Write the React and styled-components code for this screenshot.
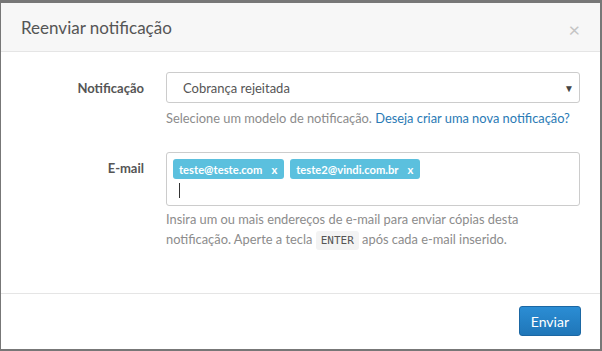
import React from "react";
import styled, { createGlobalStyle } from "styled-components";

const GlobalStyle = createGlobalStyle`
  html, body {
    margin: 0;
    padding: 0;
    background: #777;
    font-family: Lato, "Open Sans", sans-serif;
  }
  * { box-sizing: border-box; }
`;

const Backdrop = styled.div`
  width: 602px;
  height: 351px;
  padding: 3px 2px 2px 1px;
  background: #777;
`;

const Modal = styled.div`
  width: 599px;
  height: 346px;
  background: #fff;
  display: flex;
  flex-direction: column;
`;

const Header = styled.header`
  height: 49px;
  display: flex;
  align-items: center;
  justify-content: space-between;
  padding: 0 20px 0 20px;
  background: #f7f7f7;
  border-bottom: 1px solid #e5e5e5;
`;

const Title = styled.h4`
  margin: 0;
  font-size: 17px;
  font-weight: 400;
  color: #555;
`;

const Close = styled.button`
  border: 0;
  background: none;
  padding: 0;
  color: #c4c4c4;
  font-size: 20px;
  line-height: 1;
  font-family: Lato, sans-serif;
  margin-top: 4px;
`;

const Body = styled.div`
  flex: 1;
  padding: 20px 20px 0 0;
  display: grid;
  grid-template-columns: 143px 1fr;
  column-gap: 22px;
  row-gap: 24px;
  align-content: start;
`;

const Label = styled.label`
  text-align: right;
  font-size: 13px;
  font-weight: 700;
  color: #555;
  padding-top: ${(p) => p.$top}px;
`;

const Field = styled.div`
  display: flex;
  flex-direction: column;
`;

const Select = styled.div`
  height: 31px;
  border: 1px solid #ccc;
  border-radius: 3px;
  display: flex;
  align-items: center;
  justify-content: space-between;
  padding: 0 5px 0 16px;
  font-size: 13px;
  color: #555;
`;

const Caret = styled.span`
  font-size: 10px;
  color: #444;
`;

const Help = styled.p`
  margin: ${(p) => p.$gap}px 0 0;
  font-size: 12.85px;
  line-height: 20px;
  color: #8c8c8c;
`;

const Link = styled.a`
  color: #2a7ab5;
  text-decoration: none;
`;

const TagBox = styled.div`
  height: 54px;
  border: 1px solid #ccc;
  border-radius: 3px;
  padding: 6px 6px 0 6px;
`;

const Tags = styled.div`
  display: flex;
  gap: 6px;
`;

const Tag = styled.span`
  height: 20px;
  display: inline-flex;
  align-items: center;
  gap: 9px;
  padding: 0 7px 0 6px;
  background: #5bc0de;
  border-radius: 3px;
  color: #fff;
  font-size: 11.2px;
  font-weight: 700;
`;

const Cursor = styled.span`
  display: block;
  width: 1px;
  height: 15px;
  margin: 4px 0 0 6px;
  background: #333;
`;

const Kbd = styled.code`
  font-family: "DejaVu Sans Mono", monospace;
  font-size: 11px;
  color: #555;
  background: #f3f3f3;
  border-radius: 3px;
  padding: 3px 5px;
`;

const Footer = styled.footer`
  height: 56px;
  border-top: 1px solid #e5e5e5;
  display: flex;
  align-items: center;
  justify-content: flex-end;
  padding: 0 19px 1px 0;
`;

const Button = styled.button`
  height: 30px;
  padding: 0 11px;
  border: 1px solid #1b67a3;
  border-radius: 3px;
  background: linear-gradient(#2b8dd4, #1f76b8);
  color: #fff;
  font-family: Lato, sans-serif;
  font-size: 14px;
`;

export default function App() {
  return (
    <>
      <GlobalStyle />
      <Backdrop>
        <Modal>
          <Header>
            <Title>Reenviar notificação</Title>
            <Close>×</Close>
          </Header>
          <Body>
            <Label $top={8}>Notificação</Label>
            <Field>
              <Select>
                Cobrança rejeitada
                <Caret>▼</Caret>
              </Select>
              <Help $gap={5}>
                Selecione um modelo de notificação.{" "}
                <Link href="#">Deseja criar uma nova notificação?</Link>
              </Help>
            </Field>
            <Label $top={8}>E-mail</Label>
            <Field>
              <TagBox>
                <Tags>
                  <Tag>
                    teste@teste.com <span>x</span>
                  </Tag>
                  <Tag>
                    teste2@vindi.com.br <span>x</span>
                  </Tag>
                </Tags>
                <Cursor />
              </TagBox>
              <Help $gap={3}>
                Insira um ou mais endereços de e-mail para enviar cópias desta
                <br />
                notificação. Aperte a tecla <Kbd>ENTER</Kbd> após cada e-mail
                inserido.
              </Help>
            </Field>
          </Body>
          <Footer>
            <Button>Enviar</Button>
          </Footer>
        </Modal>
      </Backdrop>
    </>
  );
}
